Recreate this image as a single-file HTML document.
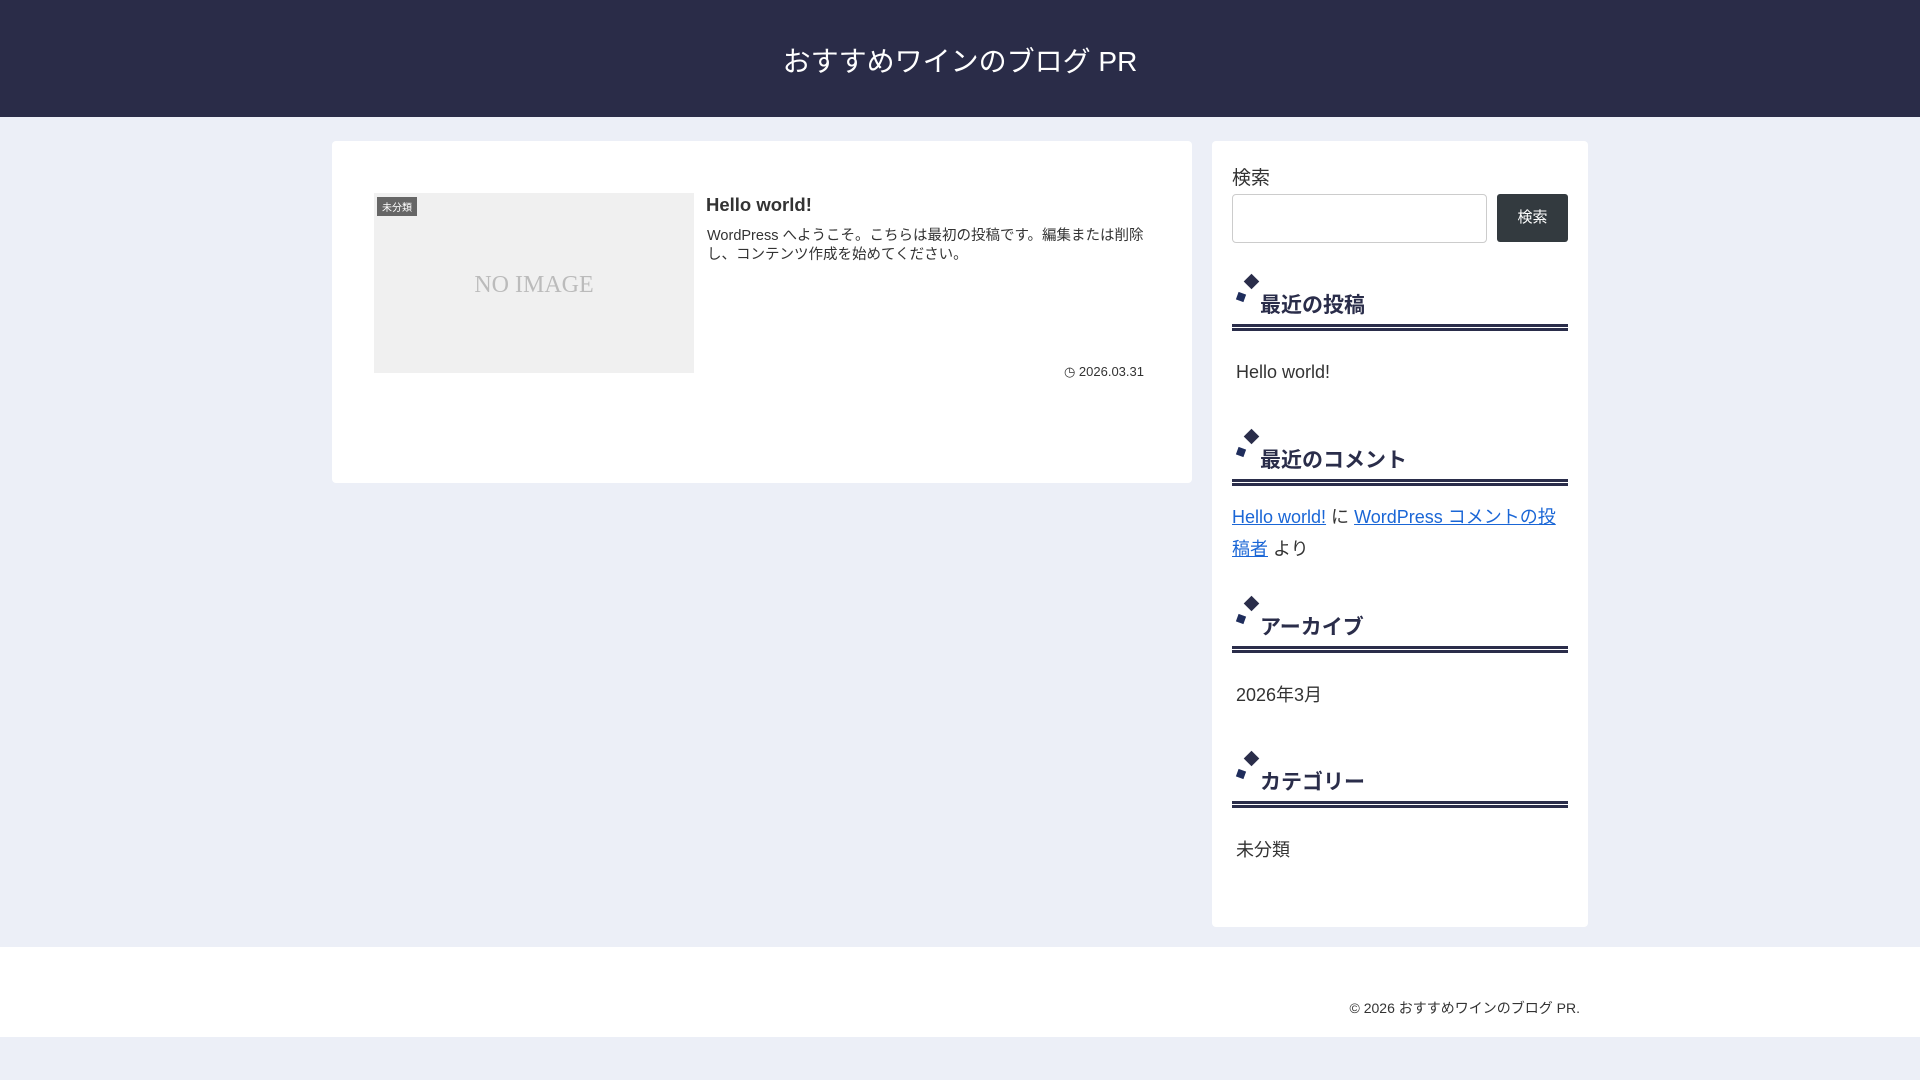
<!DOCTYPE html>
<html><head><meta charset="utf-8"><style>
*{margin:0;padding:0;box-sizing:border-box}
body{width:1920px;height:1080px;background:#eceff7;font-family:"Liberation Sans","Noto Sans CJK JP",sans-serif;color:#333;position:relative;overflow:hidden}
.a{position:absolute;white-space:nowrap}
.hdr{left:0;top:0;width:1920px;height:117px;background:#2a2c48}
.card{background:#fff;border-radius:4px}
.h{font-size:21px;font-weight:bold;color:#2a2d4a}
.l1,.l2{position:absolute;left:1232px;width:336px;height:3px;background:#2a2d4a}
.d1{width:11px;height:11px;background:#2a2d4a;transform:rotate(45deg)}
.d2{width:8px;height:8px;background:#1f2d5c;transform:rotate(20deg)}
a{color:#1a66d6}
</style></head><body>
<div class="a hdr"></div>
<div class="a" style="left:0;width:1920px;top:40px;text-align:center;color:#fff;font-size:28px">おすすめワインのブログ PR</div>

<div class="a card" style="left:332px;top:141px;width:860px;height:342px"></div>
<div class="a" style="left:374px;top:193px;width:320px;height:180px;background:#f0f0f0"></div>
<div class="a" style="left:374px;top:272px;width:320px;text-align:center;font-family:'Liberation Serif',serif;font-size:24px;color:#bbb">NO IMAGE</div>
<div class="a" style="left:377px;top:197px;background:#666;color:#fff;font-size:10px;padding:2px 5px">未分類</div>
<div class="a" style="left:706px;top:194px;font-size:18.5px;font-weight:bold;color:#333">Hello world!</div>
<div class="a" style="left:707px;top:227px;font-size:14.5px;line-height:19px;color:#333">WordPress へようこそ。こちらは最初の投稿です。編集または削除<br>し、コンテンツ作成を始めてください。</div>
<div class="a" style="left:1062px;top:364px;font-size:13px;color:#333;width:82px;text-align:right">&#9719; 2026.03.31</div>

<div class="a card" style="left:1212px;top:141px;width:376px;height:786px"></div>
<div class="a" style="left:1232px;top:163px;font-size:19px">検索</div>
<div class="a" style="left:1232px;top:194px;width:255px;height:49px;border:1px solid #ccc;border-radius:4px"></div>
<div class="a" style="left:1497px;top:194px;width:71px;height:48px;background:#333a3f;border-radius:3px;color:#fff;font-size:15px;text-align:center;line-height:48px">検索</div>

<div class="a d1" style="left:1246px;top:276px"></div><div class="a d2" style="left:1237px;top:293px"></div>
<div class="a h" style="left:1260px;top:289px">最近の投稿</div>
<div class="l1" style="top:324px"></div><div class="l2" style="top:328px"></div>
<div class="a" style="left:1236px;top:362px;font-size:18px">Hello world!</div>

<div class="a d1" style="left:1246px;top:431px"></div><div class="a d2" style="left:1237px;top:448px"></div>
<div class="a h" style="left:1260px;top:444px">最近のコメント</div>
<div class="l1" style="top:479px"></div><div class="l2" style="top:483px"></div>
<div class="a" style="left:1232px;top:501px;font-size:18px;line-height:32px">
<a href="#">Hello world!</a> に <a href="#">WordPress コメントの投</a><br><a href="#">稿者</a> より</div>

<div class="a d1" style="left:1246px;top:598px"></div><div class="a d2" style="left:1237px;top:615px"></div>
<div class="a h" style="left:1260px;top:611px">アーカイブ</div>
<div class="l1" style="top:646px"></div><div class="l2" style="top:650px"></div>
<div class="a" style="left:1236px;top:681px;font-size:18px">2026年3月</div>

<div class="a d1" style="left:1246px;top:753px"></div><div class="a d2" style="left:1237px;top:770px"></div>
<div class="a h" style="left:1260px;top:766px">カテゴリー</div>
<div class="l1" style="top:801px"></div><div class="l2" style="top:805px"></div>
<div class="a" style="left:1236px;top:836px;font-size:18px">未分類</div>

<div class="a" style="left:0;top:947px;width:1920px;height:90px;background:#fff"></div>
<div class="a" style="left:1200px;width:380px;text-align:right;top:998px;font-size:14px;color:#333">© 2026 おすすめワインのブログ PR.</div>
</body></html>
